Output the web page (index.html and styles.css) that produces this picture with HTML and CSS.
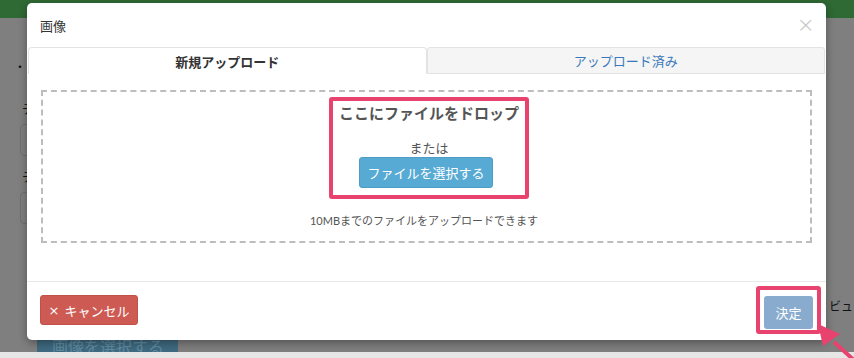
FILE: index.html
```html
<!DOCTYPE html>
<html lang="ja">
<head>
<meta charset="utf-8">
<title>画像</title>
<link rel="stylesheet" href="styles.css">
</head>
<body>
<div class="page">
  <div class="topbar"></div>
  <div class="bg-content">
    <div class="bg-dot">・</div>
    <div class="bg-label">テ</div>
    <div class="bg-input"></div>
    <div class="bg-label">テ</div>
    <div class="bg-input"></div>
  </div>
  <div class="bg-bottom">
    <div class="bg-button">画像を選択する</div>
  </div>
  <div class="bg-view">ビュー</div>
</div>

<div class="modal">
  <div class="modal-header">
    <span class="modal-title">画像</span>
    <span class="modal-close">×</span>
  </div>
  <div class="tabs">
    <div class="tab tab-active">新規アップロード</div>
    <div class="tab tab-other">アップロード済み</div>
  </div>
  <div class="modal-body">
    <div class="dropzone">
      <div class="highlight">
        <div class="drop-title">ここにファイルをドロップ</div>
        <div class="drop-or">または</div>
        <div class="select-btn">ファイルを選択する</div>
      </div>
      <div class="drop-note">10MBまでのファイルをアップロードできます</div>
    </div>
  </div>
  <div class="modal-footer">
    <div class="cancel-btn"><span class="x">×</span>キャンセル</div>
    <div class="ok-wrap"><div class="ok-btn">決定</div></div>
  </div>
</div>

<svg class="arrow" width="60" height="50" viewBox="0 0 60 50">
  <line x1="18" y1="20" x2="40" y2="40" stroke="#e8436e" stroke-width="4"/>
  <polygon points="2,2 7,24 24,12" fill="#e8436e"/>
</svg>
</body>
</html>
```

FILE: styles.css
```css
html, body {
  margin: 0;
  padding: 0;
}
body {
  width: 854px;
  height: 358px;
  overflow: hidden;
  background: #7f7f7f;
  font-family: "Lato", "Noto Sans CJK JP", sans-serif;
  position: relative;
}
.page {
  height: 358px;
  display: flex;
  flex-direction: column;
}
.topbar {
  height: 18px;
  background: #2f6934;
  flex: none;
}
.bg-content {
  flex: 1;
  padding: 40px 0 0 20px;
  display: flex;
  flex-direction: column;
}
.bg-dot {
  font-size: 12px;
  color: #111;
  margin-left: -6px;
  height: 44px;
}
.bg-label {
  font-size: 12px;
  color: #111;
  height: 16px;
  line-height: 16px;
  margin-left: 2px;
}
.bg-input {
  width: 200px;
  height: 30px;
  border: 1px solid #707070;
  border-radius: 4px;
  margin: 6px 0 14px 0;
}
.bg-bottom {
  height: 18px;
  background: #7f7f7f;
  border-bottom: 6px solid #e6e6e6;
  flex: none;
  padding-left: 37px;
}
.bg-button {
  width: 141px;
  height: 18px;
  background: #3f6a80;
  color: #5f8aa0;
  font-size: 16px;
  line-height: 26px;
  padding-left: 15px;
  box-sizing: border-box;
  overflow: hidden;
  white-space: nowrap;
}
.bg-view {
  position: absolute;
  left: 829px;
  top: 297px;
  font-size: 12px;
  color: #111;
  white-space: nowrap;
}

.modal {
  position: absolute;
  left: 27px;
  top: 3px;
  width: 799px;
  height: 337px;
  background: #fff;
  border-radius: 5px;
  box-shadow: 0 3px 9px rgba(0, 0, 0, 0.35);
  display: flex;
  flex-direction: column;
}
.modal-header {
  height: 44px;
  display: flex;
  align-items: center;
  justify-content: space-between;
  padding: 0 13px 0 13px;
  flex: none;
}
.modal-title {
  font-size: 13px;
  color: #333;
}
.modal-close {
  font-size: 22px;
  color: #c4c4c4;
  font-family: "DejaVu Sans", sans-serif;
  font-weight: 300;
  line-height: 1;
  margin-right: -2px;
}
.tabs {
  display: flex;
  height: 27px;
  margin: 0 1px;
  flex: none;
}
.tab {
  flex: 1;
  display: flex;
  align-items: center;
  justify-content: center;
  font-size: 13px;
  box-sizing: border-box;
}
.tab-active {
  color: #333;
  font-weight: 700;
  background: #fff;
  border: 1px solid #e3e3e3;
  border-bottom: none;
  border-radius: 4px 4px 0 0;
}
.tab-other {
  color: #3a79bb;
  background: #f5f5f5;
  border: 1px solid #e3e3e3;
  border-radius: 3px 3px 0 0;
}
.modal-body {
  height: 208px;
  padding: 16px 14px 0 14px;
  box-sizing: border-box;
  border-bottom: 1px solid #e8e8e8;
  flex: none;
}
.dropzone {
  height: 153px;
  border: 2px dashed #bdbdbd;
  box-sizing: border-box;
  display: flex;
  flex-direction: column;
  align-items: center;
  padding-top: 5px;
}
.highlight {
  width: 200px;
  height: 102px;
  box-sizing: border-box;
  border: 4px solid #e8436e;
  border-radius: 3px;
  margin-left: 5px;
  display: flex;
  flex-direction: column;
  align-items: center;
}
.drop-title {
  font-size: 15px;
  font-weight: 700;
  color: #555;
  margin-top: 1px;
  line-height: 22px;
}
.drop-or {
  font-size: 13px;
  color: #555;
  margin-top: 16px;
  line-height: 16px;
}
.select-btn {
  margin-top: 1px;
  margin-left: -6px;
  width: 134px;
  height: 31px;
  box-sizing: border-box;
  background: #57aad3;
  border: 1px solid #4c9cc4;
  border-radius: 3px;
  color: #fff;
  font-size: 13px;
  display: flex;
  align-items: center;
  justify-content: center;
}
.drop-note {
  font-size: 11px;
  color: #555;
  margin-top: 13px;
  margin-left: -5px;
}
.modal-footer {
  flex: 1;
  display: flex;
  justify-content: space-between;
  align-items: flex-start;
  padding: 13px 5px 0 13px;
}
.cancel-btn {
  width: 98px;
  height: 30px;
  box-sizing: border-box;
  background: #cd5b54;
  border: 1px solid #c2504a;
  border-radius: 3px;
  color: #fff;
  font-size: 13px;
  display: flex;
  align-items: center;
  justify-content: center;
}
.cancel-btn .x {
  font-size: 13px;
  margin-right: 5px;
  font-family: "DejaVu Sans", sans-serif;
}
.ok-wrap {
  margin-top: -9px;
  width: 65px;
  height: 48px;
  box-sizing: border-box;
  border: 4px solid #e8436e;
  border-radius: 3px;
  padding: 6px 0 0 4px;
}
.ok-btn {
  width: 49px;
  height: 33px;
  box-sizing: border-box;
  background: #88abce;
  border-radius: 3px;
  color: #fff;
  font-size: 13px;
  display: flex;
  align-items: center;
  justify-content: center;
}
.arrow {
  position: absolute;
  left: 816px;
  top: 322px;
}
```
